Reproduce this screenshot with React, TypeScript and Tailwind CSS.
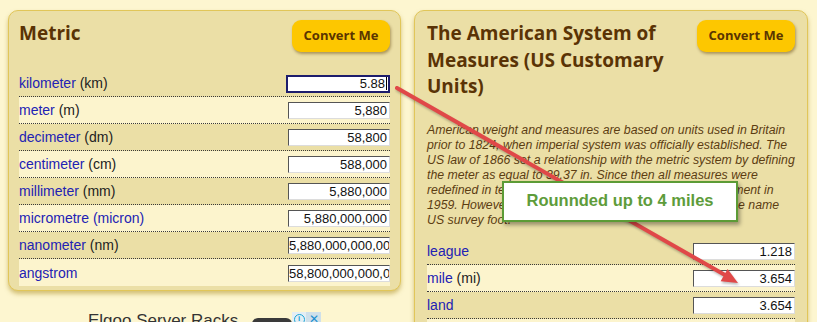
import React from "react";

type Row = { name: string; unit?: string; value: string; focused?: boolean };

const metricRows: Row[] = [
  { name: "kilometer", unit: "(km)", value: "5.88", focused: true },
  { name: "meter", unit: "(m)", value: "5,880" },
  { name: "decimeter", unit: "(dm)", value: "58,800" },
  { name: "centimeter", unit: "(cm)", value: "588,000" },
  { name: "millimeter", unit: "(mm)", value: "5,880,000" },
  { name: "micrometre (micron)", value: "5,880,000,000" },
  { name: "nanometer", unit: "(nm)", value: "5,880,000,000,000" },
  { name: "angstrom", value: "58,800,000,000,000" },
];

const usRows: Row[] = [
  { name: "league", value: "1.218" },
  { name: "mile", unit: "(mi)", value: "3.654" },
  { name: "land", value: "3.654" },
  { name: "furlong", unit: "(fur)", value: "29.23" },
  { name: "chain", unit: "(ch)", value: "292.3" },
];

const sans = { fontFamily: '"Liberation Sans", Arial, sans-serif' };
const heading = { fontFamily: '"Open Sans", "DejaVu Sans", sans-serif' };

function ValueBox({ value, focused }: { value: string; focused?: boolean }) {
  if (focused) {
    return (
      <div className="flex h-[18px] w-[104px] items-center justify-end border-2 border-[#1d1d6c] bg-white pr-[1px] text-[13px] text-[#111]">
        <span>{value}</span>
        <span className="ml-[1px] h-[13px] w-px bg-black" />
      </div>
    );
  }
  return (
    <div className="h-[17px] w-[102px] overflow-hidden whitespace-nowrap border border-t-[#555] border-l-[#555] border-b-[#dcdcdc] border-r-[#dcdcdc] bg-white pr-[2px] text-right text-[13px] leading-[15px] text-[#111]">
      {value}
    </div>
  );
}

function UnitRow({ row, index, last }: { row: Row; index: number; last?: boolean }) {
  return (
    <div
      className={`flex h-[27px] items-center justify-between pt-[1px] ${
        index % 2 === 1 ? "bg-[#fcf4cd]" : ""
      } ${last ? "" : "border-b border-dotted border-[#3a3a3a]"}`}
    >
      <span className="text-[14px]">
        <span className="text-[#2222b4]">{row.name}</span>
        {row.unit && <span className="text-[#222]"> {row.unit}</span>}
      </span>
      <ValueBox value={row.value} focused={row.focused} />
    </div>
  );
}

function ConvertButton() {
  return (
    <button
      className="h-[32px] w-[98px] shrink-0 rounded-[9px] bg-[#fdc700] text-[13px] font-bold text-[#5a3400] shadow-[1px_2px_3px_rgba(90,60,0,0.45)]"
      style={heading}
    >
      Convert Me
    </button>
  );
}

export default function App() {
  return (
    <div className="relative h-[322px] w-[817px] overflow-hidden bg-[#fdf6d0]" style={sans}>
      <div className="flex gap-[13px] pl-[8px] pt-[10px]">
        {/* left column */}
        <div className="w-[393px]">
          <div className="rounded-[10px] border border-[#e1c659] bg-[#ebdfa6] px-[10px] pb-[4px] pt-[9px] shadow-[0_3px_4px_rgba(170,140,30,0.5)]">
            <div className="flex items-start justify-between">
              <h2 className="text-[19px] font-bold leading-[26px] text-[#5a3305]" style={heading}>
                Metric
              </h2>
              <ConvertButton />
            </div>
            <div className="mt-[18px]">
              {metricRows.map((r, i) => (
                <UnitRow key={r.name} row={r} index={i} last={i === metricRows.length - 1} />
              ))}
            </div>
          </div>

          {/* ad strip */}
          <div className="mt-[21px] flex items-start pl-[80px]">
            <span className="text-[17px] leading-none text-[#333]">Elgoo Server Racks</span>
            <div className="ml-[14px] mt-[6px] h-[10px] w-[40px] rounded-t-[6px] bg-[#3a3a3a]" />
            <div className="flex">
              <div className="flex h-[14px] w-[14px] items-center justify-center bg-[#e4eef4]">
                <div className="flex h-[11px] w-[11px] items-center justify-center rounded-full border border-[#1aa5d6] text-[8px] font-bold leading-none text-[#1aa5d6]">
                  i
                </div>
              </div>
              <div className="flex h-[14px] w-[15px] items-center justify-center bg-[#cfe0ea] text-[12px] leading-none text-[#1a8fd0]">
                ✕
              </div>
            </div>
          </div>
        </div>

        {/* right column */}
        <div className="w-[394px]">
          <div className="rounded-[10px] border border-[#e1c659] bg-[#ebdfa6] px-[12px] pb-[4px] pt-[9px] shadow-[0_3px_4px_rgba(170,140,30,0.5)]">
            <div className="flex items-start justify-between">
              <h2 className="w-[250px] text-[19px] font-bold leading-[26.5px] text-[#5a3305]" style={heading}>
                The American System of Measures (US Customary Units)
              </h2>
              <ConvertButton />
            </div>
            <p className="mb-[10px] mt-[23px] text-[12.3px] italic leading-[15px] text-[#5c3d12]">
              American weight and measures are based on units used in Britain
              <br />
              prior to 1824, when imperial system was officially established. The
              <br />
              US law of 1866 set a relationship with the metric system by defining
              <br />
              the meter as equal to 39.37 in. Since then all measures were
              <br />
              redefined in terms of the metric units, with a slight adjustment in
              <br />
              1959. However, the older definition was retained under the name
              <br />
              US survey foot.
            </p>
            <div>
              {usRows.map((r, i) => (
                <UnitRow key={r.name} row={r} index={i} />
              ))}
            </div>
          </div>
        </div>
      </div>

      {/* annotation arrow */}
      <svg
        className="pointer-events-none absolute left-0 top-0 drop-shadow-[1px_2px_1px_rgba(0,0,0,0.25)]"
        width="817"
        height="322"
      >
        <line x1="397" y1="88" x2="725" y2="275" stroke="#e04848" strokeWidth="4" strokeLinecap="round" />
        <polygon points="738,283 720.6,281.2 727.6,269" fill="#e04848" />
      </svg>

      {/* callout */}
      <div className="absolute left-[502px] top-[181px] flex h-[41px] w-[236px] items-center justify-center border-2 border-[#5c9b36] bg-white pb-[3px] text-[16.5px] font-bold text-[#5e9c3b] shadow-[2px_3px_4px_rgba(0,0,0,0.35)]">
        Rounnded up to 4 miles
      </div>
    </div>
  );
}
